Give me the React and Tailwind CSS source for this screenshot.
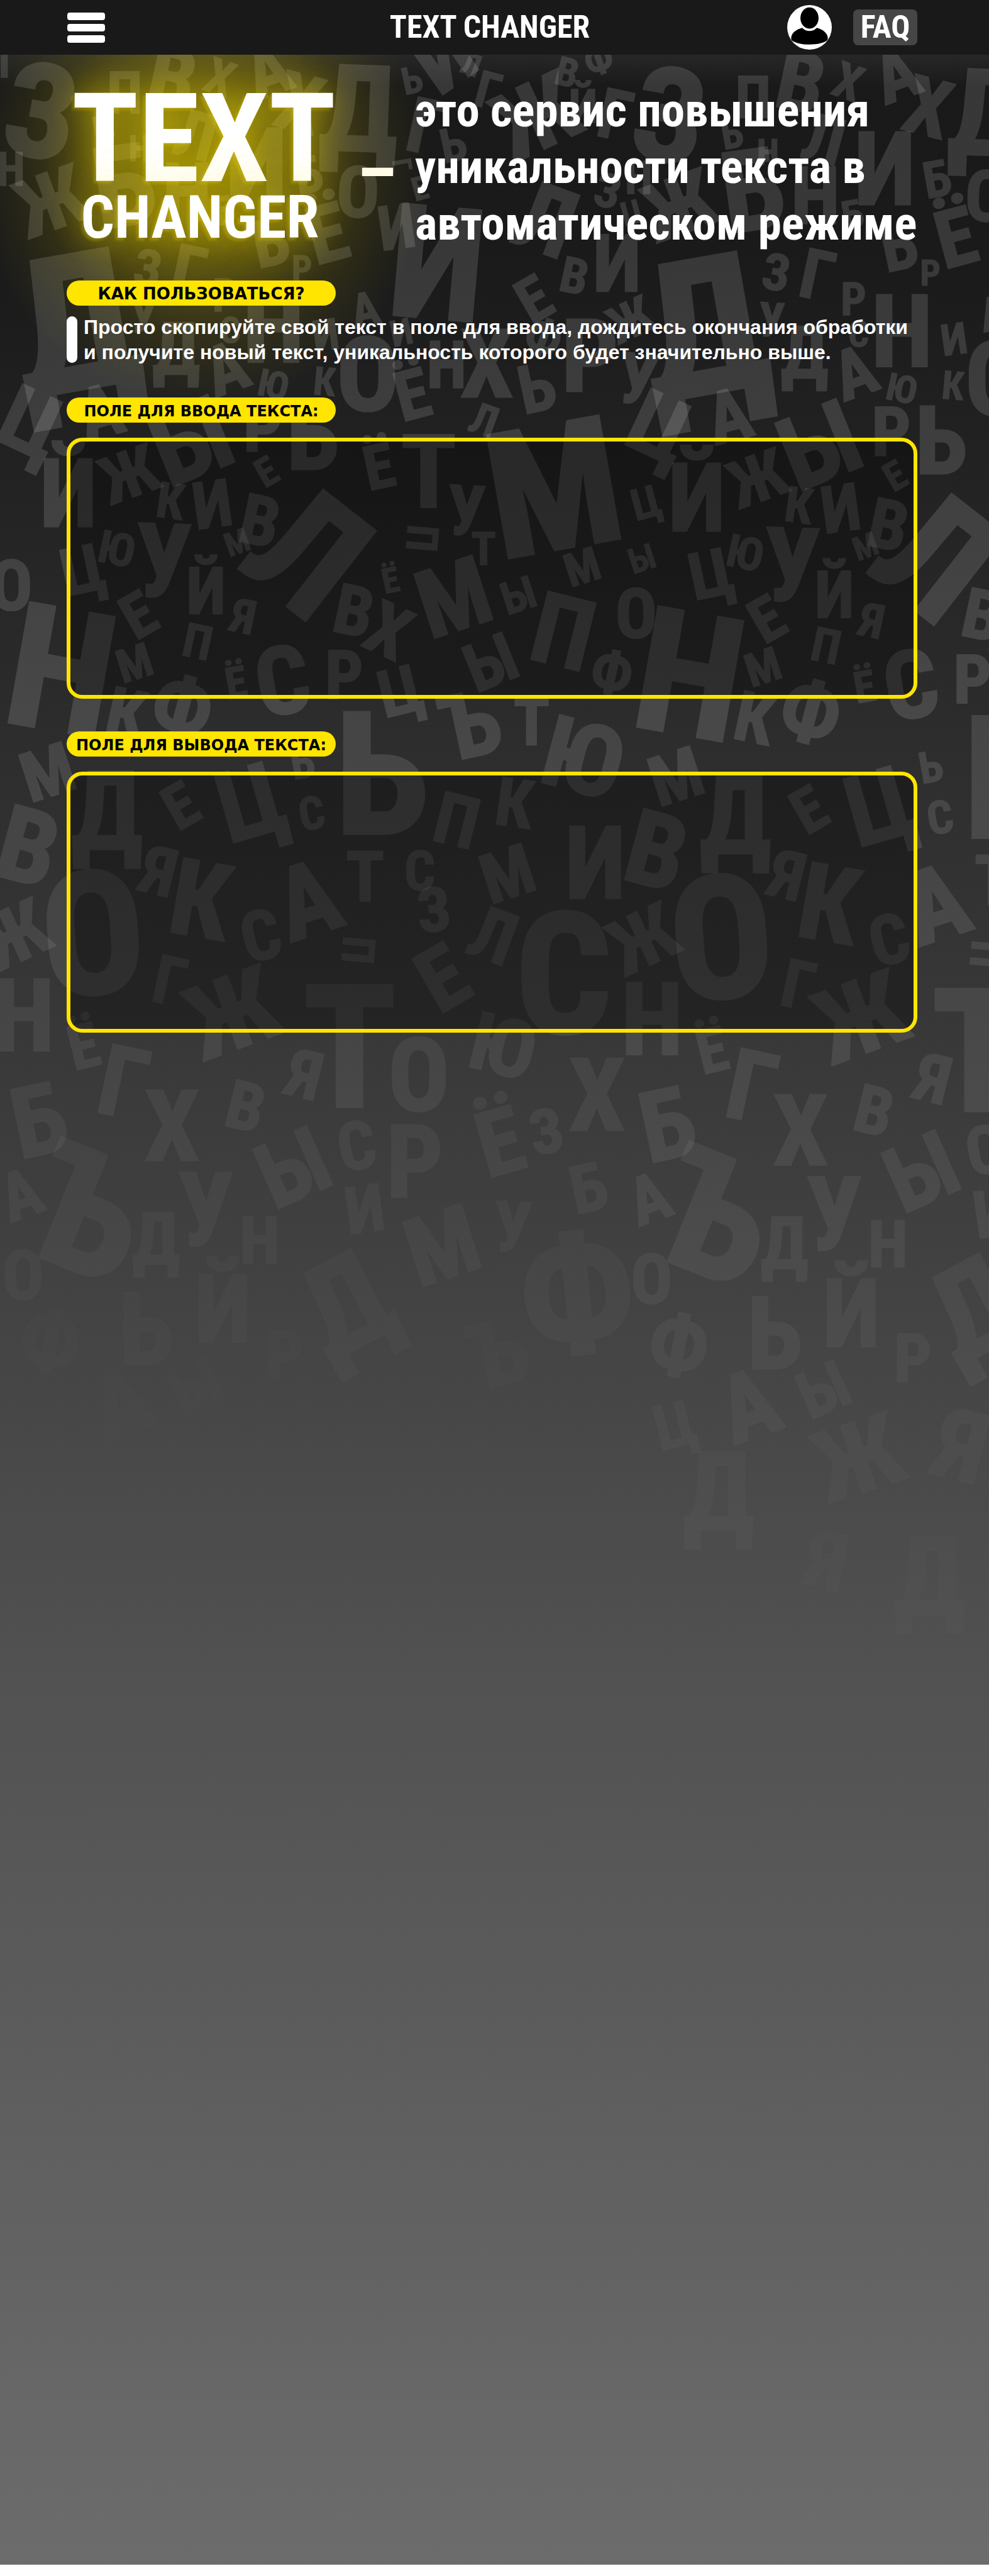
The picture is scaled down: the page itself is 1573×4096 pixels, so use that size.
const DISPLAY = "font-['Liberation_Sans_Narrow','Roboto_Condensed','DejaVu_Sans_Condensed',sans-serif] font-bold";
const LABEL = "font-['DejaVu_Sans',sans-serif] font-bold";

// [letter, centre x, centre y, cap height, rotation]
const LETTERS = [
  ["Г", 18, 120, 60, 0], ["З", 80, 215, 180, 10], ["В", 335, 150, 115, 12], ["Х", 427, 150, 68, 20],
  ["А", 520, 135, 100, -20], ["П", 242, 180, 80, 0], ["Х", 582, 199, 110, 15], ["Д", 697, 210, 165, 2],
  ["Ь", 800, 155, 52, -12], ["И", 860, 110, 120, -35], ["Л", 915, 125, 42, 20], ["Г", 948, 175, 70, 15],
  ["Г", 828, 245, 105, 12], ["Ь", 880, 280, 65, -12], ["Ж", 1040, 225, 130, -25], ["В", 1101, 140, 55, 15],
  ["Ф", 1162, 115, 55, -20], ["Й", 1132, 205, 65, 0], ["Г", 1195, 222, 95, 12], ["Ь", 201, 252, 55, -10],
  ["Н", 271, 287, 50, 0], ["Л", 380, 262, 90, 15], ["И", 498, 319, 140, 0], ["Б", 240, 360, 155, -8],
  ["Н", 363, 372, 110, 0], ["Б", 599, 339, 70, -10], ["О", 695, 372, 98, 2], ["Н", 21, 328, 64, 0],
  ["Ж", 98, 390, 110, -20], ["Б", 435, 408, 55, -10], ["Г", 781, 320, 36, 80], ["Е", 815, 365, 45, -15],
  ["И", 850, 510, 215, 5], ["И", 770, 440, 85, -8], ["Л", 1060, 425, 130, 20], ["З", 1180, 370, 65, 15],
  ["Ц", 1227, 412, 45, -15], ["Н", 1240, 345, 62, 0], ["И", 1198, 510, 110, 0], ["Ё", 635, 452, 110, -15],
  ["Ь", 525, 470, 90, -12], ["Р", 586, 521, 50, 0], ["Р", 437, 573, 62, 0], ["З", 287, 520, 70, 10],
  ["Г", 367, 525, 95, 12], ["Д", 145, 625, 260, -10], ["У", 278, 612, 65, 3], ["Д", 342, 676, 100, 0],
  ["А", 439, 714, 95, -20], ["Н", 531, 634, 138, 0], ["С", 447, 640, 50, 0], ["И", 632, 650, 60, -8],
  ["Ю", 531, 746, 52, 12], ["К", 630, 740, 54, 5], ["О", 714, 725, 142, 0], ["А", 709, 600, 65, -12],
  ["И", 779, 645, 50, -12], ["Ё", 800, 765, 95, -15], ["Н", 867, 708, 90, 0], ["Х", 945, 705, 130, 0],
  ["Е", 1036, 580, 85, -30], ["В", 1115, 535, 68, 12], ["Ф", 1055, 655, 70, 20], ["Р", 1145, 690, 138, 0],
  ["Ж", 1223, 620, 70, -25], ["Ь", 1042, 752, 92, -12], ["У", 1238, 735, 96, 8], ["Ц", 62, 820, 120, 25],
  ["А", 195, 798, 100, -15], ["Ы", 370, 855, 140, -22], ["Р", 510, 828, 95, 0], ["Ь", 607, 846, 130, 0],
  ["Т", 832, 915, 140, 0], ["Ё", 735, 905, 85, -12], ["Л", 940, 815, 60, 20], ["М", 1075, 945, 240, -10],
  ["Й", 133, 957, 130, 0], ["Ж", 250, 920, 90, -20], ["Е", 517, 915, 55, -30], ["К", 331, 972, 68, 8],
  ["И", 412, 978, 90, -8], ["В", 505, 1010, 95, 12], ["М", 460, 1052, 45, -20], ["Л", 600, 1070, 220, 38],
  ["У", 905, 990, 95, 3], ["Т", 939, 1064, 63, 0], ["П", 820, 1045, 60, 95], ["Ц", 1254, 975, 60, -15],
  ["О", 22, 1136, 97, 0], ["Н", 120, 1300, 235, 10], ["Ц", 160, 1105, 90, -12], ["Ю", 227, 1065, 62, 12],
  ["У", 317, 1087, 140, 2], ["Й", 400, 1146, 90, 0], ["Ё", 758, 1126, 48, -12], ["М", 880, 1158, 130, -18],
  ["В", 687, 1185, 95, 12], ["Х", 755, 1223, 100, 25], ["Ы", 1006, 1155, 62, -18], ["М", 1130, 1100, 64, -18],
  ["Ы", 1246, 1084, 48, -18], ["Е", 268, 1193, 85, -30], ["Я", 473, 1196, 65, 12], ["П", 384, 1245, 65, 12],
  ["М", 261, 1286, 64, -18], ["Ф", 354, 1373, 115, 15], ["Ё", 458, 1324, 60, -10], ["С", 548, 1320, 130, -10],
  ["Р", 668, 1310, 93, 0], ["Ц", 777, 1340, 90, -14], ["Ы", 952, 1285, 92, -22], ["П", 1094, 1225, 135, 14],
  ["О", 1235, 1190, 95, 0], ["Ф", 1188, 1305, 80, 12], ["К", 245, 1385, 95, 12], ["Ъ", 912, 1406, 125, -12],
  ["Т", 1032, 1400, 92, 0], ["Ю", 1133, 1470, 135, 15], ["М", 92, 1498, 95, -18], ["Ь", 741, 1500, 234, 0],
  ["Ь", 587, 1480, 60, -10], ["Ц", 487, 1555, 135, -16], ["Д", 208, 1573, 150, 0], ["Е", 350, 1563, 85, -30],
  ["С", 605, 1578, 63, -10], ["П", 887, 1592, 98, 14], ["К", 999, 1558, 92, 8], ["И", 1156, 1674, 138, 0],
  ["В", 55, 1642, 142, 15], ["Я", 309, 1690, 92, 14], ["К", 390, 1745, 145, 10], ["А", 597, 1745, 140, -18],
  ["Т", 709, 1700, 97, 0], ["С", 815, 1690, 75, 0], ["З", 842, 1765, 85, -5], ["М", 985, 1695, 95, -18],
  ["С", 506, 1815, 95, -14], ["О", 180, 1810, 235, -4], ["Ж", 28, 1814, 105, -25], ["Г", 330, 1903, 92, 12],
  ["П", 696, 1844, 62, 95], ["Е", 858, 1897, 120, -30], ["Л", 958, 1815, 100, 20], ["С", 1094, 1888, 232, 0],
  ["Н", 46, 1970, 139, 0], ["Ё", 162, 2030, 85, -14], ["Ж", 450, 1965, 140, -20], ["Т", 679, 2030, 235, 0],
  ["О", 813, 2084, 140, 0], ["Ю", 977, 2030, 110, 14], ["Г", 240, 2100, 135, 12], ["Б", 75, 2173, 135, -12],
  ["Х", 334, 2185, 135, 0], ["В", 477, 2147, 92, 14], ["Я", 592, 2085, 92, 14], ["Ы", 568, 2265, 125, -24],
  ["С", 692, 2223, 92, -10], ["Р", 805, 2254, 138, 0], ["Ё", 970, 2215, 125, -16], ["З", 1060, 2195, 85, -10],
  ["Х", 1159, 2125, 138, 0], ["А", 40, 2317, 92, -20], ["Ъ", 168, 2352, 230, 22], ["Д", 303, 2404, 100, 0],
  ["У", 399, 2346, 140, 0], ["Н", 504, 2407, 90, 0], ["И", 708, 2346, 90, -8], ["М", 858, 2416, 130, -18],
  ["У", 995, 2380, 95, 3], ["Ф", 1120, 2509, 220, -6], ["Б", 1142, 2305, 92, -12], ["О", 45, 2474, 95, 0],
  ["Ф", 98, 2602, 115, 10], ["Ь", 284, 2579, 138, 0], ["Й", 433, 2540, 130, 0], ["Р", 552, 2628, 92, 0],
  ["Д", 670, 2530, 175, -28], ["Ъ", 966, 2626, 125, -12], ["С", 808, 2735, 135, -8], ["А", 233, 2718, 130, -20],
  ["Ы", 378, 2688, 90, -24], ["Ц", 90, 2757, 85, -14], ["Ж", 445, 2820, 135, -18], ["Я", 647, 2797, 135, 14],
  ["Д", 175, 2885, 150, 0], ["Я", 385, 3020, 110, 12], ["Д", 585, 3050, 150, 0],
];

const TILES = [
  { dx: 0, dy: 0, end: 2750, from: 0 },
  { dx: 1220, dy: 8, end: 3150, from: 25 },
];

function LetterPattern() {
  return (
    <svg
      aria-hidden="true"
      viewBox="0 0 1920 4978"
      preserveAspectRatio="xMidYMin slice"
      className={`pointer-events-none absolute inset-0 h-full w-full select-none ${DISPLAY}`}
      fill="#fff"
      stroke="#fff"
      textAnchor="middle"
    >
      {TILES.map((tile) =>
        LETTERS.filter((l) => l[1] >= tile.from && l[1] + tile.dx < 1980 && l[2] < tile.end).map(([ch, x, y, h, r]) => (
          <text
            key={`${tile.dx}-${ch}-${x}-${y}`}
            transform={`translate(${x + tile.dx} ${y + tile.dy}) rotate(${r})`}
            y={h / 2}
            fontSize={h / 0.711}
            strokeWidth={h / 36}
            opacity={0.13 * Math.min(1, (tile.end - y) / (tile.end - 1300))}
          >
            {ch}
          </text>
        ))
      )}
    </svg>
  );
}

function Header() {
  return (
    <header className="relative z-10 grid h-[87px] grid-cols-[1fr_auto_1fr] items-center bg-[#191919] pl-[107px] pr-[114px] text-white">
      <button type="button" aria-label="Меню" className="flex w-[60px] flex-col gap-[6px]">
        <span className="h-[12px] rounded-[4px] bg-white" />
        <span className="h-[12px] rounded-[4px] bg-white" />
        <span className="h-[12px] rounded-[4px] bg-white" />
      </button>
      <p className={`${DISPLAY} pr-[8px] text-[50px] leading-[57px]`}>TEXT CHANGER</p>
      <div className="flex items-center justify-end gap-[34px]">
        <button type="button" aria-label="Профиль">
          <svg viewBox="0 0 86 86" className="size-[71px]">
            <circle cx="43" cy="43" r="43" fill="#fff" />
            <path d="M29 44C14 48 6 57 8 67c5 6 20 9 35 9s30-3 35-9c2-10-6-19-21-23-4 4-8 6-14 6s-10-2-14-6z" fill="#000" />
            <ellipse cx="43" cy="25" rx="17.5" ry="20.5" fill="#000" />
          </svg>
        </button>
        <a href="#faq" className={`${DISPLAY} flex h-[57px] w-[102px] items-center justify-center rounded-[8px] bg-[#464646] text-[50px]`}>
          FAQ
        </a>
      </div>
    </header>
  );
}

function Pill({ as: Tag = "h2", size = "text-[24px]", children, ...rest }) {
  return (
    <Tag {...rest} className={`${LABEL} ${size} flex h-[40px] w-[428px] items-center justify-center whitespace-nowrap rounded-full bg-[#ffe500] pt-[3px] text-black`}>
      {children}
    </Tag>
  );
}

function Field({ id, label, readOnly, className }) {
  return (
    <div className={className}>
      <Pill as="label" htmlFor={id}>{label}</Pill>
      <textarea
        id={id}
        readOnly={readOnly}
        className="mt-[24px] block h-[415px] w-full resize-none rounded-[25px] border-[6px] border-[#ffe500] bg-black/35 p-5 text-[28px] text-white outline-none"
      />
    </div>
  );
}

export default function App() {
  return (
    <div className="bg-white">
      <div className="relative aspect-[1920/4978] w-full overflow-hidden bg-[linear-gradient(to_bottom,#191919_0%,#1a1a1a_10%,#383838_40%,#525252_66%,#6c6c6c_100%)]">
        <LetterPattern />
        <div className="absolute left-0 top-0 h-[720px] w-[700px] bg-[radial-gradient(ellipse_360px_380px_at_320px_265px,#ffe50070_0%,#ffe50050_35%,#ffe50018_70%,#ffe50000_100%)]" />
        <Header />
        <div className="h-[50px] bg-linear-to-b from-white/6 to-transparent" />
        <main className="relative -mt-[50px] pl-[106px] pr-[114px]">
          <section className="flex pt-[43px] text-white">
            <h1 className={`${DISPLAY} w-[436px] shrink-0 pt-[11px] text-center [text-shadow:-4px_4px_4px_#ffe50040,0_0_50px_#ffe50070,0_0_110px_#ffe50070]`}>
              <span className="block text-[197px] leading-[160px]">TEXT</span>
              <span className="block pr-[12px] text-[94px] leading-[90px]">CHANGER</span>
            </h1>
            <span className={`${DISPLAY} w-[114px] shrink-0 self-center pt-[20px] text-center text-[115px] leading-[90px] text-[#fffbe6]`}>–</span>
            <p className={`${DISPLAY} ml-[4px] whitespace-nowrap text-[75px] leading-[90px]`}>
              это сервис повышения
              <br />
              уникальности текста в
              <br />
              автоматическом режиме
            </p>
          </section>

          <section className="mt-[46px]">
            <Pill size="text-[26px]">КАК ПОЛЬЗОВАТЬСЯ?</Pill>
            <div className="mt-[14px] flex gap-[10px]">
              <span className="my-[3px] w-[17px] shrink-0 rounded-full bg-white" />
              <p className="font-['Liberation_Sans',Arial,sans-serif] text-[32px] font-bold leading-[40px] text-white">
                Просто скопируйте свой текст в поле для ввода, дождитесь окончания обработки
                <br />
                и получите новый текст, уникальность которого будет значительно выше.
              </p>
            </div>
          </section>

          <Field id="source" label="ПОЛЕ ДЛЯ ВВОДА ТЕКСТА:" className="mt-[52px]" />
          <Field id="result" label="ПОЛЕ ДЛЯ ВЫВОДА ТЕКСТА:" readOnly className="mt-[52px]" />
        </main>
      </div>
    </div>
  );
}
